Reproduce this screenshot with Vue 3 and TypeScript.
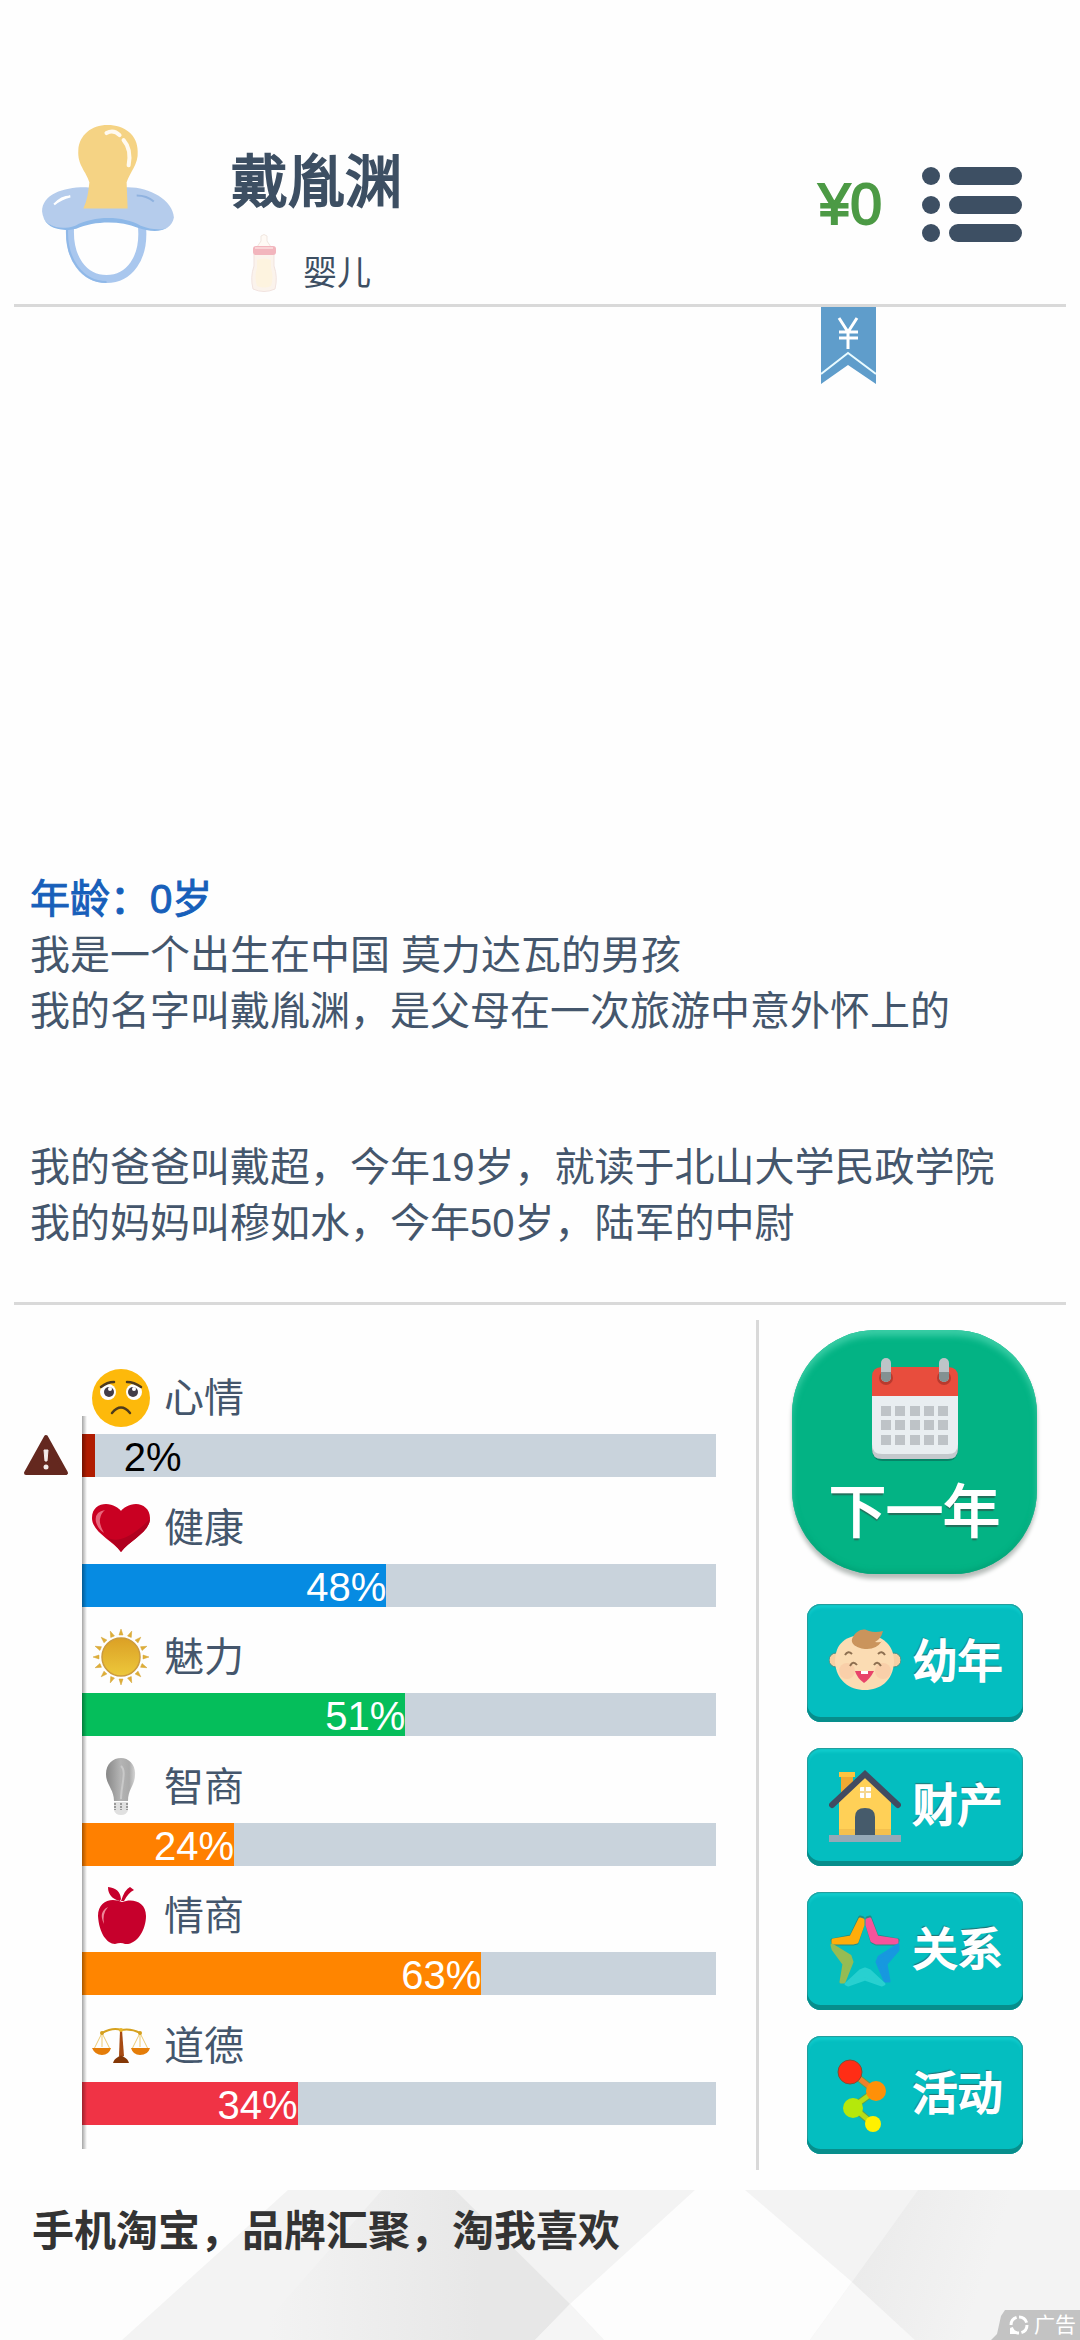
<script setup lang="ts">
interface Stat {
  id: string
  label: string
  value: number
  color: string
}

interface Action {
  id: string
  label: string
}

const stats: Stat[] = [
  { id: 'mood', label: '心情', value: 2, color: '#b01c00' },
  { id: 'health', label: '健康', value: 48, color: '#068be2' },
  { id: 'charm', label: '魅力', value: 51, color: '#05be5b' },
  { id: 'iq', label: '智商', value: 24, color: '#ff8000' },
  { id: 'eq', label: '情商', value: 63, color: '#ff8500' },
  { id: 'moral', label: '道德', value: 34, color: '#f03345' },
]

const actions: Action[] = [
  { id: 'childhood', label: '幼年' },
  { id: 'assets', label: '财产' },
  { id: 'relations', label: '关系' },
  { id: 'activities', label: '活动' },
]

const sunRays = Array.from({ length: 16 }, (_, i) => i * 22.5)
const calendarColumns = [10, 24, 39, 53, 67]
const calendarRows = [48, 62, 77]
</script>

<template>
  <div class="page">
    <header class="header">
      <svg class="avatar" viewBox="0 0 131 157" aria-hidden="true">
        <path d="M28 98C25 133 42 153 64 153C86 153 103 133 99 98" fill="none" stroke="#a9c7ee" stroke-width="8" />
        <path d="M25 102C23 133 40 156 64 156" fill="none" stroke="#8fb8e8" stroke-width="2" />
        <path d="M46 62C24 61 0 68 0 86C1 99 15 107 34 102C50 94 78 93 95 101C112 106 128 107 131 92C130 74 105 61 83 62Z" fill="#b5ccec" />
        <path d="M1 91C5 101 18 105 33 100C52 90 80 90 98 100C109 104 119 105 126 101C116 108 105 105 95 102C78 95 52 95 34 103C16 107 4 101 1 91Z" fill="#8db8e8" />
        <path d="M47 57C44 46 35 40 36 25C37 10 49 0 65 0C82 0 95 10 95 26C96 39 87 47 84 57L85 83H41C45 75 46 66 47 57Z" fill="#f5d384" />
        <path d="M64 8Q71 4 77 10M81 15Q89 24 86 40" fill="none" stroke="#fffaf0" stroke-width="4" stroke-linecap="round" />
        <path d="M12 79Q19 71 28 71Q19 73 12 79Z" fill="#fff" stroke="#fff" stroke-width="2" />
        <path d="M94 70Q104 70 111 76" fill="none" stroke="#8fb2df" stroke-width="2" />
      </svg>
      <div class="identity">
        <h1 class="name">戴胤渊</h1>
        <div class="stage">
          <svg class="bottle" viewBox="0 0 26 58" aria-hidden="true">
            <path d="M10 7V2Q13-1 16 2V7L20 13H6Z" fill="#fffaf5" stroke="#f0e6df" />
            <path d="M3 20H23V32Q27 43 24 55Q13 60 2 55Q-1 43 3 32Z" fill="#fbf3ec" stroke="#f1e3df" />
            <path d="M6 26Q13 23 20 26V34Q23 43 20 52Q13 55 6 52Q3 43 6 34Z" fill="#fdf3df" />
            <rect x="2" y="12" width="23" height="9" rx="3" fill="#f2b5bd" />
            <path d="M4 14H22" stroke="#f9d5d7" stroke-width="2" />
          </svg>
          <span>婴儿</span>
        </div>
      </div>
      <div class="money">¥0</div>
      <button class="menu" type="button" aria-label="菜单">
        <svg viewBox="0 0 100 75" fill="#3d4f63" aria-hidden="true">
          <template v-for="y in [0, 29, 57]" :key="y">
            <circle cx="9" :cy="y + 9" r="9" />
            <rect x="27" :y="y" width="73" height="18" rx="9" />
          </template>
        </svg>
      </button>
      <svg class="ribbon" viewBox="0 0 55 77" aria-hidden="true">
        <path d="M0 0H55V77L27 58L0 77Z" fill="#5f9dcb" />
        <path d="M0 67L27 46L55 67" fill="none" stroke="#e9fbff" stroke-width="2" />
        <path d="M18 11L27 25L36 11M27 25V42M18 25H37M18 31H37" fill="none" stroke="#fff" stroke-width="3" />
      </svg>
    </header>

    <main class="log">
      <h2 class="age">年龄：0岁</h2>
      <p>我是一个出生在中国 莫力达瓦的男孩</p>
      <p>我的名字叫戴胤渊，是父母在一次旅游中意外怀上的</p>
      <p class="paragraph">我的爸爸叫戴超，今年19岁，就读于北山大学民政学院</p>
      <p>我的妈妈叫穆如水，今年50岁，陆军的中尉</p>
    </main>

    <section class="panel">
      <div class="stats">
        <div v-for="stat in stats" :key="stat.id" class="stat">
          <div class="stat-head">
            <svg class="stat-icon" viewBox="0 0 58 58" aria-hidden="true">
              <g v-if="stat.id === 'mood'">
                <circle cx="29" cy="29" r="29" fill="#fdb90b" />
                <circle cx="16" cy="23" r="8" fill="#fff" />
                <circle cx="42" cy="23" r="8" fill="#fff" />
                <circle cx="17" cy="23" r="5" fill="#433d48" />
                <circle cx="41" cy="23" r="5" fill="#433d48" />
                <circle cx="18" cy="20" r="2" fill="#fff" />
                <circle cx="42" cy="20" r="2" fill="#fff" />
                <path d="M9 18Q15 13 22 13M35 13Q42 13 49 18M20 44Q29 33 38 44" fill="none" stroke="#4e3b1c" stroke-width="2.5" stroke-linecap="round" />
              </g>
              <g v-else-if="stat.id === 'health'">
                <path d="M29 53C20 41 0 33 0 19C0 9 7 5 14 5C21 5 27 9 29 12C31 9 37 5 44 5C51 5 58 10 58 19C58 33 38 41 29 53Z" fill="#c90022" />
                <path d="M58 20C57 34 38 41 29 53C25 47 19 42 14 38Q30 48 58 20Z" fill="#b0001f" />
                <path d="M13 11Q2 13 4 23Q6 30 12 34Q7 25 8 20Q9 14 13 11Z" fill="#e8667c" />
              </g>
              <g v-else-if="stat.id === 'charm'">
                <path v-for="angle in sunRays" :key="angle" d="M27 7L29 1L31 7Z" fill="#dfae36" stroke="#d3a436" stroke-width="0.5" :transform="`rotate(${angle} 29 29)`" />
                <circle cx="29" cy="29" r="19" fill="url(#sun-fill)" stroke="#cc9b3c" stroke-width="1.5" />
              </g>
              <g v-else-if="stat.id === 'iq'">
                <path d="M22 43C22 31 14 27 14 16C14 6 21 0 29 0C37 0 44 7 43 17C43 27 36 31 36 43Z" fill="url(#bulb-fill)" />
                <path d="M29 8C35 13 29 28 29 41" fill="none" stroke="#c9c9c9" stroke-width="2" />
                <path d="M22 44H36V52Q35 57 29 57Q23 57 22 52Z" fill="#e0e0e0" />
                <path d="M23 45V52M29 45V52M35 45V52" stroke="#999" stroke-width="2" stroke-dasharray="2 1" />
              </g>
              <g v-else-if="stat.id === 'eq'">
                <path d="M30 15C19 10 6 14 6 29C7 46 15 57 23 57Q29 55 33 57C45 58 54 43 54 29C54 14 40 11 30 15Z" fill="#c6002c" />
                <path d="M29 14Q33 2 38 0L42 3Q36 6 32 14ZM28 14Q16 11 16 0Q28 1 29 12Z" fill="#c6002c" />
                <path d="M16 20Q6 25 12 37Q10 27 16 20Z" fill="#ee8799" />
              </g>
              <g v-else>
                <path d="M10 16Q21 10 29 13Q39 11 48 16" fill="none" stroke="#d6a11e" stroke-width="2" />
                <path d="M10 16L2 32M10 16L18 32M10 16V30M48 16L40 32M48 16L56 32M48 16V30" fill="none" stroke="#edcb72" />
                <path d="M0 31H19Q17 38 10 38Q3 38 0 31ZM39 31H58Q56 38 48 38Q41 38 39 31Z" fill="#e57d09" />
                <path d="M28 13H30L32 39H27Z" fill="#a74b13" />
                <path d="M21 46Q22 42 26 40Q29 37 32 40Q36 42 37 46Z" fill="#843706" />
                <circle cx="10" cy="16" r="2" fill="#d6a11e" />
                <circle cx="48" cy="16" r="2" fill="#d6a11e" />
                <circle cx="29" cy="13" r="2" fill="#e8b52a" />
              </g>
              <defs>
                <linearGradient id="sun-fill" x1="0" y1="0" x2="0" y2="1">
                  <stop offset="0" stop-color="#dba025" />
                  <stop offset="1" stop-color="#edc83b" />
                </linearGradient>
                <linearGradient id="bulb-fill">
                  <stop offset="0" stop-color="#878787" />
                  <stop offset="0.5" stop-color="#b4b4b4" />
                  <stop offset="0.8" stop-color="#aaa" />
                  <stop offset="1" stop-color="#d5d5d5" />
                </linearGradient>
              </defs>
            </svg>
            <span>{{ stat.label }}</span>
          </div>
          <div class="track" role="meter" :aria-label="stat.label" aria-valuemin="0" aria-valuemax="100" :aria-valuenow="stat.value">
            <svg v-if="stat.value < 10" class="warning" viewBox="0 0 46 42" aria-hidden="true">
              <path d="M23 3L43 39H3Z" fill="#64281f" stroke="#64281f" stroke-width="4" stroke-linejoin="round" />
              <path d="M21 16H25L24 27H22Z" fill="#f3eae8" stroke="#f3eae8" stroke-linejoin="round" />
              <circle cx="23" cy="33" r="2.5" fill="#f3eae8" />
            </svg>
            <div class="fill" :style="{ width: `${stat.value}%`, background: stat.color }">
              <span :class="['percent', { outside: stat.value < 10 }]">{{ stat.value }}%</span>
            </div>
          </div>
        </div>
      </div>

      <nav class="side">
        <button class="next" type="button">
          <svg class="calendar" viewBox="0 0 88 104" aria-hidden="true">
            <path d="M1 90Q1 103 12 103H76Q87 103 87 90Z" fill="#078467" />
            <path d="M1 25H87V91Q87 101 77 101H11Q1 101 1 91Z" fill="#c4c9cd" />
            <path d="M1 25H87V86Q87 96 77 96H11Q1 96 1 86Z" fill="#e9eef1" />
            <path d="M1 38V19Q1 9 11 9H77Q87 9 87 19V38Z" fill="#e84d3d" />
            <circle cx="15" cy="20" r="7" fill="#b93a2e" />
            <circle cx="73" cy="20" r="7" fill="#b93a2e" />
            <g v-for="x in [10, 68]" :key="x">
              <rect :x="x" y="0" width="10" height="24" rx="5" fill="#bec4c8" />
              <path :d="`M${x} 14h10v5a5 5 0 0 1-10 0z`" fill="#839192" />
            </g>
            <g v-for="y in calendarRows" :key="y" fill="#bec3c7">
              <rect v-for="x in calendarColumns" :key="x" :x="x" :y="y" width="10" height="10" />
            </g>
          </svg>
          <span>下一年</span>
        </button>
        <button v-for="action in actions" :key="action.id" class="action" type="button">
          <svg class="action-icon" viewBox="0 0 72 76" aria-hidden="true">
            <g v-if="action.id === 'childhood'">
              <ellipse cx="7" cy="35" rx="7" ry="7" fill="#f5d0a4" stroke="#448e86" />
              <ellipse cx="65" cy="35" rx="7" ry="7" fill="#f5d0a4" stroke="#448e86" />
              <path d="M6 37C6 18 17 10 36 10C54 10 65 20 65 37C64 56 51 65 36 65C20 65 7 55 6 37Z" fill="#fbdcb3" />
              <circle cx="18" cy="46" r="8" fill="#f9cfa9" />
              <circle cx="54" cy="46" r="8" fill="#f9cfa9" />
              <path d="M24 12C27 6 34 2 40 6Q46 8 54 6Q52 14 46 17Q52 18 53 16Q47 25 36 24C27 23 20 18 24 12Z" fill="#ca945c" />
              <path d="M16 30Q19 25 23 29M49 29Q53 25 56 30M21 41Q24 35 28 40M45 40Q48 35 52 41" fill="none" stroke="#8e7051" stroke-width="2" />
              <path d="M26 46H45Q41 54 35 58Q28 53 26 46Z" fill="#e8446a" />
              <path d="M32 46H39V49H32Z" fill="#fff" />
            </g>
            <g v-else-if="action.id === 'assets'">
              <path d="M12 6H24V28H12Z" fill="#f0a932" />
              <path d="M10 3H26V8H10Z" fill="#ffc440" />
              <path d="M10 32L36 7L62 32V67H10Z" fill="#ffd057" />
              <path d="M10 60H62V67H10Z" fill="#f4c04e" />
              <path d="M3 36L36 5L69 36" fill="none" stroke="#414b61" stroke-width="6" stroke-linecap="round" />
              <rect x="31" y="18" width="11" height="11" rx="1" fill="#fff" />
              <path d="M36 18V29M31 23H42" stroke="#f5d690" stroke-width="2" />
              <path d="M26 67V48Q26 39 36 39Q46 39 46 48V67Z" fill="#465b6b" />
              <rect x="0" y="66" width="72" height="7" fill="#95a9b7" />
            </g>
            <g v-else-if="action.id === 'relations'" stroke-linejoin="round" stroke-width="3">
              <path d="M31 4L34 5V12L28 30L24 31H4L3 27L22 23Z" fill="#238b83" stroke="#238b83" />
              <path d="M38 5L41 4L48 23L69 27L68 31H47L43 29L38 12Z" fill="#238b83" stroke="#238b83" />
              <path d="M31 6L34 7V12L28 29L24 30H4V27L22 24Z" fill="#ffad0a" stroke="#ffad0a" />
              <path d="M38 7L41 6L48 24L68 27V30H47L43 28L38 12Z" fill="#f7539b" stroke="#f7539b" />
              <path d="M3 32L21 43L23 49L15 69H12L15 51L4 36Z" fill="#95bc54" stroke="#95bc54" />
              <path d="M69 32L50 44L48 49L56 68H60L57 51L69 37Z" fill="#1798df" stroke="#1798df" />
              <path d="M17 71L31 58L36 56L41 58L55 71L53 72L36 66L19 72Z" fill="#28d0d0" stroke="#28d0d0" />
            </g>
            <g v-else>
              <path d="M22 15L46 34L24 50L44 67" fill="none" stroke="#5f9f50" stroke-width="7" />
              <path d="M22 15L46 34" fill="none" stroke="#ed802d" stroke-width="5" />
              <path d="M46 34L24 50L44 67" fill="none" stroke="#b6dc18" stroke-width="5" />
              <circle cx="21" cy="15" r="12" fill="#ff2d15" stroke="#7a5238" />
              <circle cx="47" cy="34" r="10" fill="#ff9008" />
              <circle cx="24" cy="51" r="10" fill="#b5e80b" />
              <circle cx="44" cy="67" r="8" fill="#fff100" />
            </g>
          </svg>
          <span>{{ action.label }}</span>
        </button>
      </nav>
    </section>

    <footer class="ad">
      <svg class="ad-art" viewBox="0 0 1080 150" preserveAspectRatio="none" aria-hidden="true">
        <defs>
          <linearGradient id="ad-shade-left" gradientUnits="userSpaceOnUse" x1="270" y1="0" x2="480" y2="0">
            <stop offset="0" stop-color="#e7e7e7" stop-opacity="0" />
            <stop offset="1" stop-color="#e7e7e7" />
          </linearGradient>
          <linearGradient id="ad-shade-right" gradientUnits="userSpaceOnUse" x1="860" y1="60" x2="980" y2="100">
            <stop offset="0" stop-color="#ebebeb" />
            <stop offset="1" stop-color="#f3f3f3" />
          </linearGradient>
        </defs>
        <path d="M0 0H1080V150H0Z" fill="#f3f3f3" />
        <path d="M0 0H288L122 150H0Z" fill="#fdfdfd" />
        <path d="M382 0H455L570 114L535 150H250Z" fill="url(#ad-shade-left)" />
        <path d="M695 0H745L852 92L810 150H604L570 114Z" fill="#fdfdfd" />
        <path d="M570 114L604 150H535Z" fill="#f5f5f5" />
        <path d="M852 92L915 150H810Z" fill="#f8f8f8" />
        <path d="M918 0H1080V150H915L852 92Z" fill="url(#ad-shade-right)" />
      </svg>
      <p class="ad-text">手机淘宝，品牌汇聚，淘我喜欢</p>
      <div class="ad-badge">
        <svg viewBox="0 0 22 22" aria-hidden="true">
          <circle cx="11" cy="11" r="8" fill="none" stroke="#fff" stroke-width="3" stroke-dasharray="10 2.5" />
          <path d="M2 14V20H9Z" fill="#fff" />
        </svg>
        <span>广告</span>
      </div>
    </footer>
  </div>
</template>

<style>
body {
  margin: 0;
  background: #fefefe;
}
</style>

<style scoped>
.page {
  display: flex;
  flex-direction: column;
  min-height: 100vh;
  color: #44566c;
  font-family: "Liberation Sans", "Noto Sans CJK SC", sans-serif;
  font-size: 40px;
  line-height: 56px;
}

h1,
h2,
p {
  margin: 0;
  font-size: inherit;
  font-weight: 400;
}

button {
  padding: 0;
  border: 0;
  background: none;
  color: #fff;
  font: inherit;
  cursor: pointer;
}

svg {
  display: block;
  flex: none;
}

.header {
  position: relative;
  display: flex;
  align-items: center;
  margin: 0 14px;
  padding: 104px 44px 0 28px;
  height: 200px;
  border-bottom: 3px solid #d9d9d9;
}

.avatar {
  width: 132px;
  height: 158px;
}

.identity {
  align-self: stretch;
  flex: 1;
  margin-left: 57px;
  padding-top: 50px;
  color: #3d4f63;
}

.name {
  font-size: 57px;
  -webkit-text-stroke: 2px currentColor;
}

.stage {
  display: flex;
  align-items: flex-end;
  gap: 26px;
  margin: 24px 0 0 20px;
  font-size: 34px;
  line-height: 38px;
}

.bottle {
  width: 26px;
  height: 58px;
}

.money {
  margin-right: 40px;
  color: #4c9a45;
  font-size: 57px;
  -webkit-text-stroke: 2px currentColor;
}

.menu svg {
  width: 100px;
  height: 75px;
}

.ribbon {
  position: absolute;
  top: 100%;
  right: 190px;
  width: 55px;
  height: 77px;
  margin-top: 3px;
}

.log {
  display: flex;
  flex: 1;
  flex-direction: column;
  justify-content: flex-end;
  padding: 0 30px 54px;
}

.age {
  color: #175fba;
  -webkit-text-stroke: 1px currentColor;
}

.paragraph {
  margin-top: 100px;
}

.panel {
  position: relative;
  display: flex;
  padding: 15px 14px 20px 82px;
}

.panel::before {
  content: "";
  position: absolute;
  top: -3px;
  left: 14px;
  right: 14px;
  height: 3px;
  background: #d9d9d9;
}

.stats {
  position: relative;
  display: flex;
  flex: 1;
  flex-direction: column;
  margin-right: 40px;
  padding: 49px 0 24px;
}

.stats::after {
  content: "";
  position: absolute;
  top: 96px;
  bottom: 21px;
  left: 0;
  width: 5px;
  background: linear-gradient(90deg, rgba(0, 0, 0, 0.35), rgba(0, 0, 0, 0));
}

.stat {
  flex: 1;
}

.stat-head {
  display: flex;
  align-items: center;
  gap: 14px;
  height: 58px;
  margin: 0 0 7px 10px;
}

.stat-icon {
  width: 58px;
  height: 58px;
}

.track {
  position: relative;
  height: 43px;
  background: #c9d3dc;
}

.warning {
  position: absolute;
  top: 0;
  right: 100%;
  width: 46px;
  height: 42px;
  margin-right: 13px;
}

.fill {
  display: flex;
  justify-content: flex-end;
  height: 100%;
}

.percent {
  color: #fff;
  line-height: 46px;
}

.outside {
  flex: none;
  margin-right: -87px;
  color: #000;
}

.side {
  display: flex;
  flex-direction: column;
  align-items: center;
  gap: 26px;
  width: 303px;
  padding: 10px 0 16px 4px;
  border-left: 3px solid #d9d9d9;
}

.next {
  display: flex;
  flex-direction: column;
  align-items: center;
  gap: 22px;
  width: 245px;
  height: 244px;
  margin-bottom: 4px;
  padding-top: 28px;
  border-radius: 84px;
  background: #03b384;
  box-shadow: 0 5px 4px #b7bdba, inset 0 6px 6px #39cda5, inset 0 -3px 5px #03a478;
  box-sizing: border-box;
  font-size: 57px;
  line-height: 56px;
  -webkit-text-stroke: 2px #fff;
  text-shadow: 0 3px 1px #236f5b;
}

.calendar {
  width: 88px;
  height: 104px;
}

.action {
  display: flex;
  align-items: center;
  gap: 12px;
  width: 216px;
  height: 118px;
  padding: 0 0 0 22px;
  border-radius: 14px;
  background: #04bec0;
  box-shadow: inset 0 -5px #078e8c, inset 0 0 1px 1px #259a98, inset 0 4px 3px #10cccd;
  box-sizing: border-box;
  font-size: 45px;
  -webkit-text-stroke: 2px #fff;
  text-shadow: -1px -2px 1px #26706f;
}

.action-icon {
  width: 72px;
  height: 76px;
}

.ad {
  position: relative;
  height: 150px;
}

.ad-art {
  position: absolute;
  inset: 0;
  width: 100%;
  height: 100%;
}

.ad-text {
  position: relative;
  padding: 14px 32px;
  color: #333;
  font-size: 42px;
  font-weight: 700;
}

.ad-badge {
  position: absolute;
  right: 0;
  bottom: 0;
  display: flex;
  align-items: center;
  gap: 4px;
  padding: 0 4px 0 17px;
  background: #c3c3c3;
  clip-path: polygon(14px 0, 100% 0, 100% 100%, 0 100%, 6px 80%, 10px 20%);
  color: #fff;
  font-size: 21px;
  line-height: 30px;
}

.ad-badge svg {
  width: 22px;
  height: 22px;
}
</style>
